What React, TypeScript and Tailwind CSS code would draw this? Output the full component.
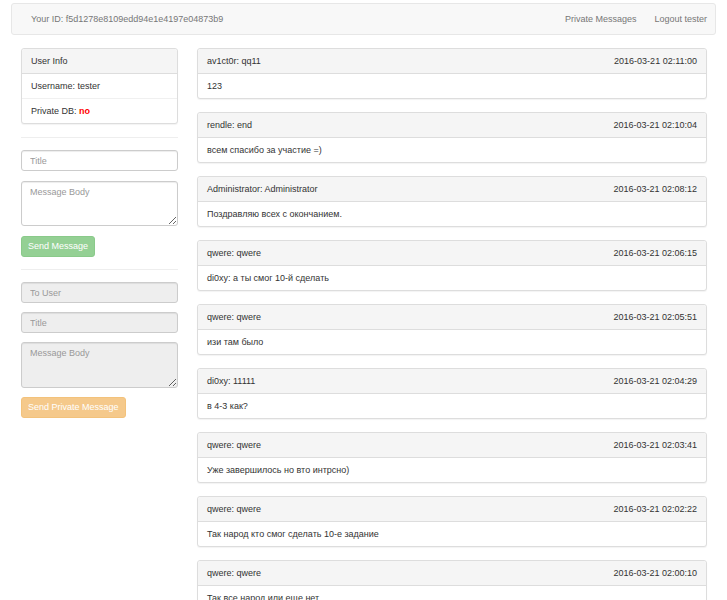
const messages = [
  { who: 'av1ct0r: qq11', at: '2016-03-21 02:11:00', text: '123' },
  { who: 'rendle: end', at: '2016-03-21 02:10:04', text: 'всем спасибо за участие =)' },
  { who: 'Administrator: Administrator', at: '2016-03-21 02:08:12', text: 'Поздравляю всех с окончанием.' },
  { who: 'qwere: qwere', at: '2016-03-21 02:06:15', text: 'di0xy: а ты смог 10-й сделать' },
  { who: 'qwere: qwere', at: '2016-03-21 02:05:51', text: 'изи там было' },
  { who: 'di0xy: 11111', at: '2016-03-21 02:04:29', text: 'в 4-3 как?' },
  { who: 'qwere: qwere', at: '2016-03-21 02:03:41', text: 'Уже завершилось но вто интрсно)' },
  { who: 'qwere: qwere', at: '2016-03-21 02:02:22', text: 'Так народ кто смог сделать 10-е задание' },
  { who: 'qwere: qwere', at: '2016-03-21 02:00:10', text: 'Так все народ или еще нет' },
];

const inputCls =
  'block w-full h-[21px] px-[8px] rounded-[3px] border border-[#ccc] shadow-[inset_0_1px_1px_rgba(0,0,0,0.075)] text-[9px] text-[#555] placeholder:text-[#999] outline-none';
const areaCls =
  'block w-full h-[45px] px-[8px] py-[4px] rounded-[3px] border border-[#ccc] shadow-[inset_0_1px_1px_rgba(0,0,0,0.075)] text-[9px] text-[#555] placeholder:text-[#999] outline-none';

export default function App() {
  return (
    <div className="min-h-[600px] bg-white font-['Liberation_Sans',Arial,sans-serif] text-[9px] leading-[13px] text-[#333]">
      {/* Navbar */}
      <div className="pt-[3px] px-[11px]">
        <div className="flex h-[32px] items-center justify-between rounded-[3px] border border-[#e7e7e7] bg-[#f8f8f8] pl-[19px] pr-[8px] text-[#777]">
          <span>Your ID: f5d1278e8109edd94e1e4197e04873b9</span>
          <div className="flex gap-[18px]">
            <span>Private Messages</span>
            <span>Logout tester</span>
          </div>
        </div>
      </div>

      <div className="mt-[13px] flex gap-[19px] pl-[21px] pr-[20px]">
        {/* Left column */}
        <div className="w-[157px] shrink-0">
          <div className="rounded-[3px] border border-[#ddd] bg-white shadow-[0_1px_1px_rgba(0,0,0,0.05)]">
            <div className="flex h-[25px] items-center border-b border-[#ddd] bg-[#f5f5f5] px-[9px] rounded-t-[3px]">User Info</div>
            <div className="flex h-[25px] items-center border-b border-[#f0f0f0] px-[9px]">Username: tester</div>
            <div className="flex h-[24px] items-center px-[9px]">
              Private DB:&nbsp;<b className="text-[#f00]">no</b>
            </div>
          </div>

          <hr className="mt-[13px] mb-[12px] border-0 border-t border-[#eee]" />

          <div className="flex flex-col gap-[10px]">
            <input className={inputCls} placeholder="Title" />
            <textarea className={areaCls} placeholder="Message Body" />
          </div>
          <button className="mt-[10px] h-[21px] rounded-[3px] border border-[#4cae4c] bg-[#5cb85c] px-[6px] text-[9px] text-white opacity-65">
            Send Message
          </button>

          <hr className="mt-[12px] mb-[12px] border-0 border-t border-[#eee]" />

          <div className="flex flex-col gap-[9px]">
            <input disabled className={inputCls + ' bg-[#eee]'} placeholder="To User" />
            <input disabled className={inputCls + ' bg-[#eee]'} placeholder="Title" />
            <textarea disabled className={areaCls + ' bg-[#eee] h-[46px]'} placeholder="Message Body" />
          </div>
          <button className="mt-[9px] h-[21px] rounded-[3px] border border-[#eea236] bg-[#f0ad4e] px-[6px] text-[9px] text-white opacity-65">
            Send Private Message
          </button>
        </div>

        {/* Messages */}
        <div className="flex-1 flex flex-col gap-[13px]">
          {messages.map((m, i) => (
            <div key={i} className="rounded-[3px] border border-[#ddd] bg-white shadow-[0_1px_1px_rgba(0,0,0,0.05)]">
              <div className="flex h-[25px] items-center justify-between border-b border-[#ddd] bg-[#f5f5f5] px-[9px] rounded-t-[3px]">
                <span>{m.who}</span>
                <span>{m.at}</span>
              </div>
              <div className="flex h-[24px] items-center px-[9px]">{m.text}</div>
            </div>
          ))}
        </div>
      </div>
    </div>
  );
}
